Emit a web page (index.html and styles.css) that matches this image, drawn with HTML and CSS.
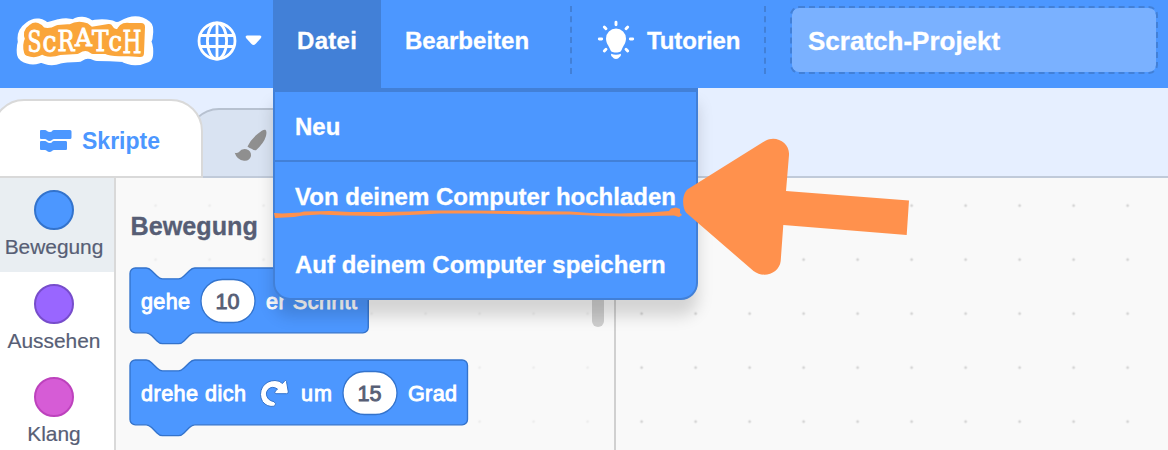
FILE: index.html
```html
<!DOCTYPE html>
<html lang="de">
<head>
<meta charset="utf-8">
<title>Scratch-Projekt</title>
<link rel="stylesheet" href="styles.css">
</head>
<body>
<div class="app">
  <header class="menubar">
    <svg class="logo" viewBox="16 13 138 54" aria-label="Scratch">
      <g stroke-linejoin="round">
        <path class="logo-rim" d="M31 29 Q38 23 45 31 Q53 29 60 27 Q68 25 74 28 Q82 21 90 29 Q100 26 110 28 Q117 32 124 28 Q136 21 145 28 Q146 36 143 42 Q146 47 145 55 Q134 60 124 54 Q110 53 97 53 Q86 48 78 54 Q64 54 58 56 Q50 59 41 54 Q33 59 25 54 Q24 48 26 42 Q24 34 31 29Z"/>
        <path class="logo-fill" d="M32 28 Q37 24 42 31 Q49 34 58 29 L71 28 Q78 24 86 27 L91 31 L109 28 Q112 34 120 33 Q122 26 129 27 L141 27 L140 53 L125 52 Q112 53 106 50 L93 50 Q86 44 77 50 L60 51 Q48 55 42 50 Q36 55 28 52 Q26 45 29 39 Q26 32 32 28Z"/>
      </g>
      <g class="logo-letters">
        <text x="27.500" y="51.500" font-size="29" textLength="14" lengthAdjust="spacingAndGlyphs">S</text>
        <text x="42.500" y="51.500" font-size="29" textLength="14" lengthAdjust="spacingAndGlyphs">c</text>
        <text x="57.500" y="50.500" font-size="27" textLength="17" lengthAdjust="spacingAndGlyphs">R</text>
        <text x="75" y="46" font-size="25" textLength="17" lengthAdjust="spacingAndGlyphs">A</text>
        <text x="92" y="51" font-size="28" textLength="16.500" lengthAdjust="spacingAndGlyphs">T</text>
        <text x="108.500" y="51" font-size="28" textLength="13.500" lengthAdjust="spacingAndGlyphs">c</text>
        <text x="122.500" y="52.500" font-size="32" textLength="19" lengthAdjust="spacingAndGlyphs">H</text>
      </g>
    </svg>
    <div class="language">
      <svg width="40" height="40" viewBox="0 0 40 40" fill="none" stroke="#fff" stroke-width="2.8">
        <circle cx="20" cy="20" r="18"/>
        <ellipse cx="20" cy="20" rx="9.6" ry="18"/>
        <path d="M20 2V38M3 14.500H37M3 25.500H37"/>
      </svg>
      <svg width="17" height="11" viewBox="0 0 17 11"><path d="M2 .5H15Q17.500 1 15.500 3.500L10.500 9Q8.500 11 6.500 9L1.500 3.500Q-.5 1 2 .5Z" fill="#fff"/></svg>
    </div>
    <div class="item item-open">Datei</div>
    <div class="item edit">Bearbeiten</div>
    <div class="item tutorials">
      <svg width="38" height="40" viewBox="0 0 38 40">
        <path d="M19 8.500A10 10 0 0 1 29 18.500C29 23 26.500 25.500 25 29C24.300 31.500 23 32.500 19 32.500S13.700 31.500 13 29C11.500 25.500 9 23 9 18.500A10 10 0 0 1 19 8.500Z" fill="#fff"/>
        <path d="M14 33.800Q19 35.800 24 33.800Q24.300 36.500 22.300 37.300Q21.500 39 19 39T15.700 37.300Q13.700 36.500 14 33.800Z" fill="#fff"/>
        <path d="M19 2.300V4.700M2.300 19H4.700M33.300 19H35.700M7.300 7L9 8.800M30.700 7L29 8.800M7.300 31L9 29.200M30.700 31L29 29.200" stroke="#fff" stroke-width="2.900" stroke-linecap="round"/>
      </svg>
      <span>Tutorien</span>
    </div>
    <div class="title-input">Scratch-Projekt</div>
  </header>

  <nav class="tabs">
    <div class="tab tab-active">
      <svg width="32" height="23" viewBox="0 0 32 23" fill="#4c97ff">
        <path d="M1 0H5Q6 0 7 1Q8 2 10 2T12 1Q13 0 14 0H30Q31.500 0 31.500 1.500V7.500Q31.500 9 30 9H14Q13 9 12 10Q11 11 9.500 11T7 10Q6 9 5 9H1Q0 9 0 8V1Q0 0 1 0Z"/>
        <path d="M1 11H5Q6 11 7 12Q8 13 10 13T12 12Q13 11 14 11H26Q27 11 27 12.500V18.500Q27 20 26 20H14Q13 20 12 21Q11 22 9.500 22T7 21Q6 20 5 20H1Q0 20 0 19V12Q0 11 1 11Z"/>
      </svg>
      <span>Skripte</span>
    </div>
    <div class="tab tab-costumes">
      <svg width="33" height="33" viewBox="0 0 33 33" fill="#8f8f8f">
        <path d="M31.300 .8Q33.200 1.500 32 7Q30 14 22 21.300Q19.500 21.500 18 20Q14.500 18.500 13.500 17.500Q17 10.500 23.500 5Q29 .3 31.300 .8Z"/>
        <path d="M.7 23.700Q3 24.500 4.700 23.300Q8 19 12.500 20.300Q17.500 22 17 27Q15.500 32.300 10 31.700Q3 31 .7 23.700Z"/>
      </svg>
    </div>
  </nav>

  <main class="editor">
    <aside class="categories">
      <div class="category selected"><i class="dot motion"></i><span>Bewegung</span></div>
      <div class="category"><i class="dot looks"></i><span>Aussehen</span></div>
      <div class="category"><i class="dot sound"></i><span>Klang</span></div>
    </aside>
    <section class="flyout">
      <h2>Bewegung</h2>
      <svg class="block" width="242" height="80" viewBox="-1 -1 242 80">
        <path transform="scale(1.35)" d="M0 4A4 4 0 0 1 4 0H12c2 0 3 1 4 2l4 4c1 1 2 2 4 2h12c2 0 3-1 4-2l4-4c1-1 2-2 4-2H172.500a4 4 0 0 1 4 4v40a4 4 0 0 1-4 4H48c-2 0-3 1-4 2l-4 4c-1 1-2 2-4 2H24c-2 0-3-1-4-2l-4-4c-1-1-2-2-4-2H4a4 4 0 0 1-4-4Z"/>
        <rect x="71" y="11.500" width="54" height="43" rx="21.500"/>
        <text x="11" y="41" textLength="49">gehe</text>
        <text class="value" x="85.500" y="41" textLength="24">10</text>
        <text x="136" y="41" textLength="91">er Schritt</text>
      </svg>
      <svg class="block" width="342" height="80" viewBox="-1 -1 342 80">
        <path transform="scale(1.35)" d="M0 4A4 4 0 0 1 4 0H12c2 0 3 1 4 2l4 4c1 1 2 2 4 2h12c2 0 3-1 4-2l4-4c1-1 2-2 4-2H246a4 4 0 0 1 4 4v40a4 4 0 0 1-4 4H48c-2 0-3 1-4 2l-4 4c-1 1-2 2-4 2H24c-2 0-3-1-4-2l-4-4c-1-1-2-2-4-2H4a4 4 0 0 1-4-4Z"/>
        <rect x="213" y="11.500" width="54" height="43" rx="21.500"/>
        <text x="11" y="41" textLength="105">drehe dich</text>
        <path class="turn" d="M152.500 23.500L154.500 21Q156 19.500 156.500 21.500L158.300 32Q158.300 33.700 156.500 33.700H146Q143.500 33 145.500 31L147.500 29Q142 25.500 138 29.500Q134.500 34 138.500 39Q140.500 41 144 41.700Q147 43.500 144.500 46.200Q137 47.500 132.500 41.500Q128.500 34.500 132.500 27Q137 20.500 145 20.500Q149.500 20.500 152.500 23.500Z"/>
        <text x="171" y="41" textLength="31">um</text>
        <text class="value" x="227.500" y="41" textLength="24">15</text>
        <text x="278" y="41" textLength="49">Grad</text>
      </svg>
      <div class="scrollbar"></div>
    </section>
    <section class="workspace"></section>
  </main>

  <div class="menu">
    <div class="menu-item">Neu</div>
    <div class="menu-item upload">Von deinem Computer hochladen</div>
    <div class="menu-item save">Auf deinem Computer speichern</div>
  </div>

  <svg class="annotation" width="1168" height="450" viewBox="0 0 1168 450" fill="#ff914d">
    <path d="M274 213L282 213.500L300 212.500L304 211.500L330 211L350 212L385 212L410 211.500L430 210.500L470 210.500L520 211L570 211.500L590 213L620 213.500L650 212.500L669 211L671 208.500L676 207.500L680 209L680 213L682 215L679 217L674 215.500L630 216.500L600 216L570 214.500L530 214.500L480 213.500L440 213.500L410 215L380 216L345 215.500L320 214.500L303 215.500L294 217L275 218Z"/>
    <path d="M688 189L765 141C776 134.500 790 143 789 155L786 191L909 200.500L906.700 235L783.300 225L780.700 261C779.500 273 764 279 753.500 271L686.500 213C682 208 681.500 194 688 189Z"/>
  </svg>
</div>
</body>
</html>
```
FILE: styles.css
```css
* { box-sizing: border-box; }

body {
  margin: 0;
  font-family: "Liberation Sans", Arial, sans-serif;
  color: #575e75;
}

.app {
  position: relative;
  display: flex;
  flex-direction: column;
  width: 1168px;
  height: 450px;
  overflow: hidden;
  background: #e6efff;
}

.menubar {
  display: flex;
  flex: 0 0 88px;
  align-items: flex-start;
  padding-left: 16px;
  background: #4c97ff;
  color: #fff;
  font-size: 24px;
  font-weight: bold;
  -webkit-text-stroke: 0.3px #fff;
}

.logo { width: 138px; height: 54px; margin-top: 13px; }
.logo-rim { fill: #fff; stroke: #fff; stroke-width: 16px; }
.logo-fill { fill: #faa53a; stroke: #faa53a; stroke-width: 8px; }
.logo-letters {
  font-family: "DejaVu Serif", serif;
  font-weight: normal;
  fill: #fff;
  stroke: #fff;
  stroke-width: 0.9px;
}

.language {
  display: flex;
  align-items: center;
  gap: 8px;
  height: 81px;
  width: 119px;
  padding-left: 43px;
}

.item { display: flex; align-items: center; height: 82px; }

.item-open {
  width: 108px;
  height: 88px;
  padding: 0 0 6px 24px;
  background: #4280d7;
  letter-spacing: 0.3px;
}

.edit { width: 189px; padding-left: 24px; }

.tutorials {
  width: 196px;
  height: 68px;
  margin-top: 6px;
  padding: 2px 0 0 25px;
  gap: 12px;
  border: dashed #4280d7;
  border-width: 0 2px;
  letter-spacing: -0.1px;
}

.tutorials svg { margin-top: -3px; }

.title-input {
  display: flex;
  align-items: center;
  width: 368px;
  height: 68px;
  margin: 6px 0 0 24px;
  padding: 3px 0 0 16px;
  border: 2px dashed #4280d7;
  border-radius: 9px;
  background: #7ab1ff;
  background-clip: padding-box;
  font-size: 26px;
}

.tabs {
  display: flex;
  align-items: flex-end;
  flex: 0 0 90px;
  border-bottom: 2px solid #c0cad9;
}

.tab { display: flex; align-items: center; }

.tab-active {
  z-index: 1;
  width: 211px;
  height: 79px;
  margin: 0 0 -2px -8px;
  padding: 6px 0 0 46px;
  gap: 10px;
  border: 2px solid #d9d9d9;
  border-radius: 32px 32px 0 0;
  background: #fff;
  color: #4c97ff;
  font-size: 23px;
  font-weight: bold;
}

.tab-costumes {
  width: 180px;
  height: 68px;
  margin-left: -16px;
  padding: 5px 0 0 45px;
  border: 2px solid #b7c1d0;
  border-bottom: 0;
  border-radius: 32px 32px 0 0;
  background: #d9e3f2;
}

.editor { display: flex; flex: 1; min-height: 0; }

.categories {
  width: 116px;
  border-right: 2px solid #d9d9d9;
  background: #fff;
  overflow: hidden;
}

.category {
  display: flex;
  flex-direction: column;
  align-items: center;
  gap: 5px;
  height: 93.5px;
  padding: 12px 6px 0 0;
  font-size: 20.9px;
  line-height: 24px;
  -webkit-text-stroke: 0.2px #575e75;
}

.selected { background: #e9eef2; }

.dot { width: 40px; height: 40px; border: 2px solid; border-radius: 50%; }
.motion { background: #4c97ff; border-color: #3373cc; }
.looks { background: #9966ff; border-color: #774dcb; }
.sound { background: #d65cd6; border-color: #bd42bd; }

.flyout {
  position: relative;
  width: 500px;
  padding: 33px 0 0 13px;
  border-right: 2px solid #d0d0d0;
  background: radial-gradient(circle, #eeeeee 1.100px, transparent 1.800px) 12.600px 0.600px / 54px 54px #f9f9f9;
}

.flyout h2 { margin: 0 0 25px 1.500px; font-size: 25.200px; line-height: 31px; -webkit-text-stroke: 0.3px #575e75; }

.block { display: block; margin-bottom: 12px; }
.block path { fill: #4c97ff; stroke: #3373cc; stroke-width: 1px; }
.block rect { fill: #fff; stroke: #3373cc; stroke-width: 1.300px; }
.block text { font-size: 21.600px; fill: #fff; stroke: #fff; stroke-width: 0.900px; }
.block .value { fill: #575e75; stroke: #575e75; }
.block .turn { fill: #fff; stroke: #3373cc; }

.scrollbar {
  position: absolute;
  top: 0;
  right: 10px;
  width: 12px;
  height: 149px;
  border-radius: 6px;
  background: #cecece;
}

.workspace {
  flex: 1;
  background: radial-gradient(circle, #d6d6d6 1.100px, transparent 1.800px) -1.400px 0.600px / 54px 54px #f9f9f9;
}

.menu {
  position: absolute;
  z-index: 2;
  top: 88px;
  left: 273px;
  width: 425px;
  height: 212px;
  border: 2px solid #4280d7;
  border-top-width: 4px;
  border-radius: 0 0 17px 17px;
  background: #4c97ff;
  box-shadow: 0 16px 16px rgba(0, 0, 0, 0.15);
  color: #fff;
  font-size: 24px;
  font-weight: bold;
  -webkit-text-stroke: 0.3px #fff;
}

.menu-item { height: 68px; padding-left: 20px; line-height: 70px; white-space: nowrap; }
.upload { height: 70px; border-top: 2px solid #4280d7; }

.annotation { position: absolute; z-index: 3; top: 0; left: 0; }
```
